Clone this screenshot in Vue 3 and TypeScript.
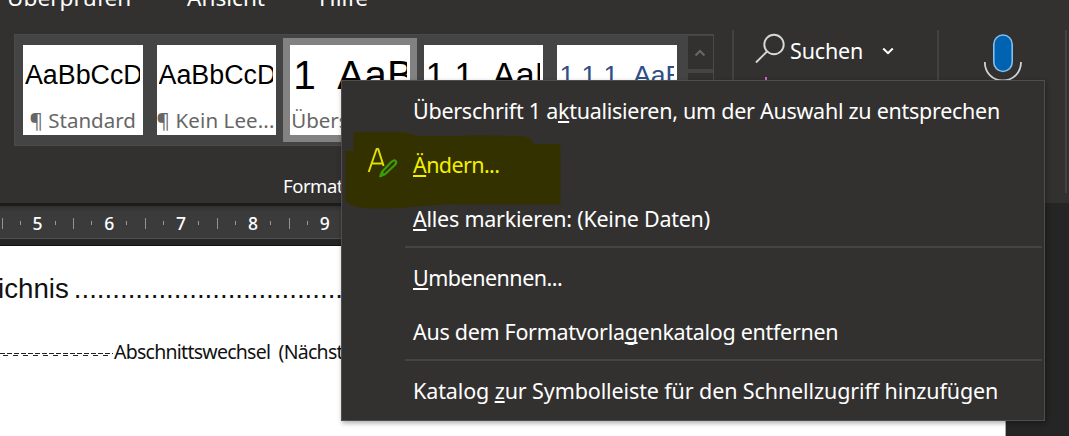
<script setup lang="ts">
interface Style { name: string; sample: string; kind: string; selected?: boolean }
interface Entry { before: string; key: string; after: string; cls: string }

const tabs = [
  { label: 'Überprüfen', cls: 'tab-review' },
  { label: 'Ansicht', cls: 'tab-view' },
  { label: 'Hilfe', cls: 'tab-help' },
]
const styles: Style[] = [
  { name: '¶ Standard', sample: 'AaBbCcD', kind: 'body' },
  { name: '¶ Kein Lee...', sample: 'AaBbCcD', kind: 'body tight' },
  { name: 'Überschrif...', sample: '1  AaB', kind: 'h1', selected: true },
  { name: 'Überschrif...', sample: '1.1  AaB', kind: 'h2' },
  { name: 'Überschrif...', sample: '1.1.1  AaB', kind: 'h3' },
]
const groups: Entry[][] = [
  [
    { before: 'Überschrift 1 a', key: 'k', after: 'tualisieren, um der Auswahl zu entsprechen', cls: 'update' },
    { before: '', key: 'Ä', after: 'ndern...', cls: 'modify' },
    { before: '', key: 'A', after: 'lles markieren: (Keine Daten)', cls: 'select' },
  ],
  [
    { before: '', key: 'U', after: 'mbenennen...', cls: 'rename' },
    { before: 'Aus dem Formatvorla', key: 'g', after: 'enkatalog entfernen', cls: 'remove' },
  ],
  [{ before: 'Katalog ', key: 'z', after: 'ur Symbolleiste für den Schnellzugriff hinzufügen', cls: 'quick' }],
]
const marks = [5, 6, 7, 8, 9]
const leader = '.'.repeat(60)
</script>

<template>
  <div class="window">
    <header class="ribbon">
      <nav class="tabs">
        <span v-for="t in tabs" :key="t.label" :class="t.cls">{{ t.label }}</span>
      </nav>
      <div class="tools">
        <div class="gallery">
          <div v-for="(s, i) in styles" :key="i" class="slot" :class="{ selected: s.selected }">
            <div class="card" :class="s.kind">
              <div class="sample">{{ s.sample }}</div>
              <div class="name">{{ s.name }}</div>
            </div>
          </div>
          <div class="scroller">
            <div class="step">
              <svg width="12" height="8" viewBox="0 0 12 8"><path d="M1.500 6.500 6 2l4.500 4.500" fill="none" stroke="#6a6866" stroke-width="2" /></svg>
            </div>
            <div class="step"></div>
            <div class="step"></div>
          </div>
        </div>
        <div class="editing">
          <svg class="lens" width="32" height="32" viewBox="0 0 32 32" fill="none" stroke="#d8d8d8" stroke-width="1.900">
            <circle cx="19" cy="11.500" r="9.700" /><path d="M12 18.500 1 29.500" />
          </svg>
          <span class="find">Suchen</span>
          <svg class="chev" width="12" height="8" viewBox="0 0 12 8"><path d="M1.200 1.500 6 6.200l4.800-4.700" fill="none" stroke="#fff" stroke-width="2" /></svg>
          <i class="accent"></i>
        </div>
        <div class="voice">
          <svg width="40" height="56" viewBox="0 0 40 56">
            <path d="M1.800 28c0 11 8 18.500 18 18.500S38 39 38 28" fill="none" stroke="#d2d2d2" stroke-width="1.800" />
            <rect x="10.800" y="1" width="18.400" height="36.500" rx="9.200" fill="#0063b1" stroke="#83beec" stroke-width="1.600" />
          </svg>
        </div>
      </div>
      <div class="caption">Formatvorlagen</div>
    </header>
    <div class="ruler">
      <div class="scale">
        <div v-for="m in marks" :key="m" class="unit">
          <i class="major"></i><i class="minor"></i><b>{{ m }}</b><i class="minor"></i>
        </div>
      </div>
    </div>
    <main class="page">
      <p class="toc"><span>ichnis</span><span class="leader">{{ leader }}</span></p>
      <div class="break"><i class="dashes"></i><span>Abschnittswechsel (Nächste Seite)</span></div>
    </main>

    <div class="menu">
      <svg class="marker" width="704" height="341" viewBox="341 80 704 341">
        <path d="M353.500 132H400C408 132 414 136 422 136H462C478 134.500 490 136 522 136Q532 137 533.500 144H558Q560.500 144 560.500 147V204.500H462C440 203.500 428 206.500 405 207.500C390 209 370 208.500 362 208Q350 206 345.500 201V152Q345.500 151 348 151H353.500Z" fill="#333100" />
        <g fill="none" stroke-linejoin="round">
          <path d="M368.700 172 376.600 149H378.200L383.600 166M372 163.500H382.500" stroke="#e0de00" stroke-width="2" />
          <path d="M380.300 176.200 382.300 171.500 391.500 161.800Q394.300 159.500 395.600 160.900Q397 162.500 394.800 165L385 174.200Z" stroke="#3c9d0c" stroke-width="2.200" />
          <path d="M380 176.500 382.500 172 384.500 174.500Z" fill="#3c9d0c" stroke="#3c9d0c" />
        </g>
      </svg>
      <div v-for="(g, gi) in groups" :key="gi" class="group">
        <div v-for="e in g" :key="e.cls" class="entry" :class="e.cls">
          <span>{{ e.before }}<u>{{ e.key }}</u>{{ e.after }}</span>
        </div>
      </div>
    </div>
  </div>
</template>

<style>
body { margin: 0; overflow: hidden; background: #252525; }
</style>

<style scoped>
.window { position: relative; width: 1069px; height: 436px; overflow: hidden; background: #252525; font-family: "Noto Sans", "Open Sans", sans-serif; color: #fff; }
.ribbon { height: 203px; overflow: hidden; background: #323130; }
.tabs { display: flex; height: 30px; font-size: 22.600px; line-height: 30px; white-space: nowrap; }
.tabs span { margin-top: -17px; }
.tab-review { margin-left: 7px; width: 180px; }
.tab-view { width: 132px; }
.tools { display: flex; height: 144px; }
.gallery { box-sizing: border-box; display: flex; align-items: center; width: 700px; height: 112px; margin: 4px 0 0 14px; padding-left: 1px; background: #444; border: 1px solid #4c4a48; }
.slot { box-sizing: border-box; flex: none; width: 133.600px; height: 104px; padding: 7px; }
.selected { background: #828282; }
.card { height: 90px; overflow: hidden; background: #fff; }
.sample { height: 60px; margin: 0 3px 0 2px; overflow: hidden; font: 26.800px/60px "Liberation Sans", sans-serif; color: #000; white-space: pre; }
.h1 .sample { font-size: 40.600px; margin-left: 3px; word-spacing: 0.600px; }
.h2 .sample { font-size: 34.500px; margin-left: 2px; word-spacing: 0.800px; }
.h3 .sample { font-size: 26.500px; margin-left: 2px; word-spacing: 0.800px; color: #2f4f86; }
.name { height: 30px; line-height: 31px; padding-left: 1px; font-size: 20.500px; color: #666; white-space: nowrap; }
.body .name { padding-left: 6.500px; }
.tight .name { padding-left: 0; letter-spacing: 0.100px; }
.scroller { width: 25px; height: 108px; margin-left: 4px; display: flex; flex-direction: column; gap: 4px; }
.step { display: flex; align-items: center; justify-content: center; height: 35px; background: #323130; }
.editing { display: flex; width: 203px; margin-left: 18px; border-left: 2px solid #434240; border-right: 2px solid #434240; position: relative; }
.lens { margin: 3px 0 0 21px; }
.find { margin: 6px 0 0 3px; width: 92px; font-size: 21.500px; line-height: 30px; letter-spacing: -0.150px; }
.chev { margin-top: 17px; }
.accent { position: absolute; left: 31px; top: 47px; width: 2px; height: 5px; background: #d265d2; }
.voice { width: 126px; height: 163px; flex: none; border-right: 2px solid #434240; }
.voice svg { margin: 4px 0 0 44px; }
.caption { width: 200px; margin-left: 283px; font-size: 18.500px; line-height: 23px; letter-spacing: -0.450px; }
.ruler { height: 43px; width: 1045px; box-sizing: border-box; background: linear-gradient(#1c1c1c 0 3px, #303030 3px, #3b3b3b 9px 35px, #505050 35px 36px, #252525 36px 42px, #111 42px); }
.scale { display: flex; padding-top: 4px; }
.unit { display: flex; flex: none; align-items: center; width: 71.800px; height: 32px; }
.unit b { width: 18px; margin-left: 8px; text-align: center; font-size: 17.500px; line-height: 30px; margin-top: -1px; font-weight: 500; }
.major { width: 1px; height: 11px; margin-left: 1.500px; background: #929292; }
.minor { width: 1px; height: 4px; margin-left: 8px; background: #999; }
.major + .minor { margin-left: 17px; }
.page { width: 1005px; height: 190px; overflow: hidden; background: #fff; border-right: 1px solid #aaa; color: #111; }
.toc { display: flex; margin: 27px 0 0 -2px; font: 27.700px/32px "Liberation Sans", sans-serif; }
.leader { margin-left: 5px; }
.break { display: flex; align-items: center; height: 30px; margin-top: 31px; font-size: 19.500px; letter-spacing: -0.740px; word-spacing: 4px; white-space: nowrap; }
.dashes { width: 113px; height: 3px; margin: 6px 1px 0 0; background: repeating-linear-gradient(90deg, #222 0 5px, transparent 5px 7px) 0 0 / 100% 1px no-repeat, repeating-linear-gradient(90deg, transparent 0 3px, #222 3px 8px, transparent 8px 10px) 0 2px / 100% 1px no-repeat; }
.menu { position: absolute; left: 341px; top: 80px; box-sizing: border-box; width: 704px; height: 341px; padding-top: 3px; background: #323130; border: 1px solid #504e4c; box-shadow: 1px 2px 5px #0005; }
.marker { position: absolute; left: -1px; top: -1px; }
.group + .group { padding-top: 5px; position: relative; }
.group + .group::before { content: ""; display: block; position: absolute; left: 63px; right: 2px; top: 0; height: 2px; background: #454443; }
.entry { position: relative; height: 54px; line-height: 54px; padding-left: 71px; font-size: 21.500px; white-space: nowrap; }
.entry u { text-decoration-thickness: 1.500px; text-underline-offset: 2px; text-decoration-skip-ink: none; }
.update { letter-spacing: -0.270px; }
.modify { color: #f2ef00; letter-spacing: -0.600px; }
.select { letter-spacing: -0.240px; }
.rename { letter-spacing: -0.500px; }
.remove { letter-spacing: -0.300px; }
.quick { letter-spacing: -0.110px; }
</style>
